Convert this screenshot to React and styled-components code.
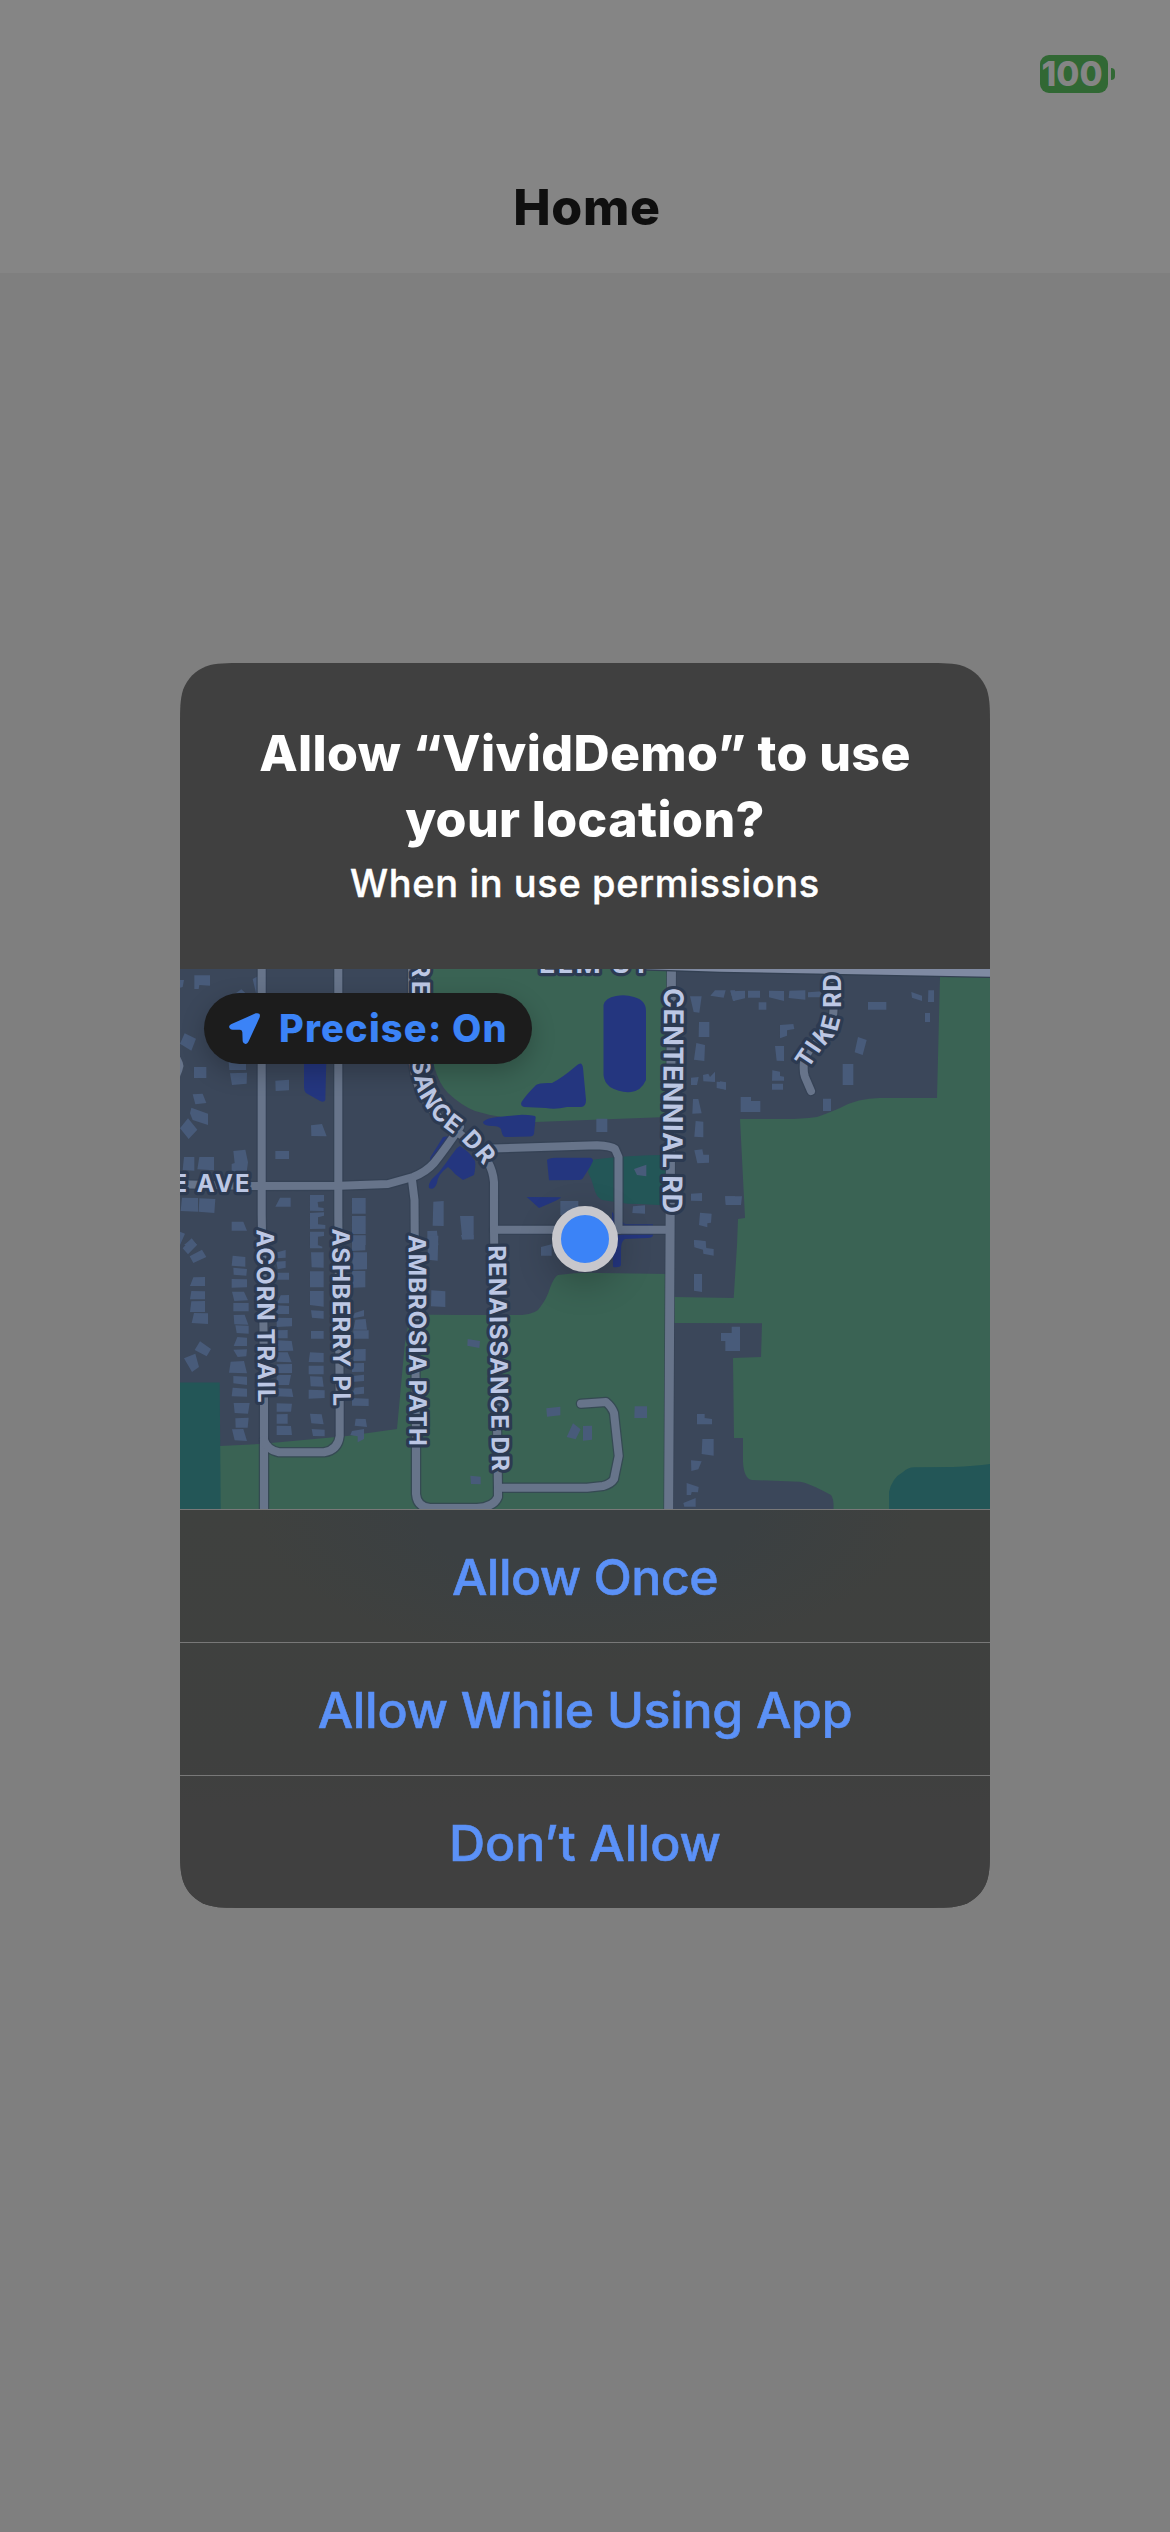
import React from "react";
import styled, { createGlobalStyle } from "styled-components";

const GlobalStyle = createGlobalStyle`
  * { box-sizing: border-box; }
  html, body { margin: 0; padding: 0; }
  body {
    background: #7f7f7f;
    font-family: Inter, "Liberation Sans", sans-serif;
  }
`;

const Screen = styled.div`
  display: flex;
  flex-direction: column;
  width: 1170px;
  height: 2532px;
  overflow: hidden;
  background: #7f7f7f;
`;

const TopBar = styled.header`
  display: flex;
  flex-direction: column;
  flex: none;
  height: 273px;
  background: #858585;
`;

const StatusBar = styled.div`
  display: flex;
  justify-content: flex-end;
  align-items: center;
  gap: 3px;
  height: 148px;
  padding-right: 55px;
`;

const BatteryBody = styled.div`
  display: flex;
  align-items: center;
  justify-content: center;
  width: 68px;
  height: 38px;
  padding-right: 4px;
  border-radius: 9px;
  background: #316834;
  color: #858585;
  font-size: 33.5px;
  font-weight: 800;
  line-height: 38px;
`;

const BatteryCap = styled.div`
  width: 4px;
  height: 12px;
  border-radius: 0 6px 6px 0;
  background: #316834;
`;

const NavTitle = styled.h1`
  margin: 26px 0 0;
  text-align: center;
  font-size: 50px;
  font-weight: 800;
  line-height: 66px;
  letter-spacing: 0.7px;
  padding-left: 4px;
  color: #0f0f0f;
`;

const Stage = styled.main`
  display: flex;
  flex: 1;
  justify-content: center;
  align-items: flex-start;
  padding-top: 390px;
`;

const CARD_W = 810;
const CARD_H = 1245;

/* Outline of a rectangle with continuous (squircle) corners. */
function continuousCorners(w, h, r) {
  const corner = (x, y, ax, ay, bx, by) => {
    const p = (a, b) =>
      `${(x + (ax * a + bx * b) * r).toFixed(2)} ${(y + (ay * a + by * b) * r).toFixed(2)}`;
    return (
      `L${p(1.52866, 0)}C${p(1.08849, 0)} ${p(0.86841, 0)} ${p(0.63149, 0.07491)}` +
      `C${p(0.37282, 0.16906)} ${p(0.16906, 0.37282)} ${p(0.07491, 0.63149)}` +
      `C${p(0, 0.86841)} ${p(0, 1.08849)} ${p(0, 1.52866)}`
    );
  };
  return (
    `M${w / 2} 0` +
    corner(w, 0, -1, 0, 0, 1) +
    corner(w, h, 0, -1, -1, 0) +
    corner(0, h, 1, 0, 0, -1) +
    corner(0, 0, 0, 1, 1, 0) +
    "Z"
  );
}

const Alert = styled.section`
  display: flex;
  flex-direction: column;
  width: ${CARD_W}px;
  height: ${CARD_H}px;
  background: #404040;
  clip-path: path("${continuousCorners(CARD_W, CARD_H, 42)}");
`;

const AlertHeader = styled.div`
  display: flex;
  flex-direction: column;
  align-items: center;
  height: 306px;
  padding-top: 57px;
  text-align: center;
  color: #fff;
`;

const AlertTitle = styled.h2`
  width: 720px;
  margin: 0;
  font-size: 50px;
  font-weight: 800;
  line-height: 66px;
  letter-spacing: 0.38px;
`;

const AlertText = styled.p`
  margin: 5px 0 0;
  font-size: 38px;
  font-weight: 500;
  line-height: 52px;
  letter-spacing: 0.61px;
  -webkit-text-stroke: 0.4px currentColor;
`;

const MapFrame = styled.div`
  position: relative;
  height: 540px;
  overflow: hidden;
`;

const MapCanvas = styled.svg`
  display: block;
  width: 810px;
  height: 540px;
`;

const PrecisePill = styled.button`
  position: absolute;
  left: 24px;
  top: 24px;
  display: flex;
  align-items: center;
  gap: 18px;
  width: 328px;
  height: 71px;
  padding: 0 0 0 24px;
  border: 0;
  border-radius: 36px;
  background: #1c1c1c;
  box-shadow: 0 8px 24px rgba(0, 0, 0, 0.22);
  color: #3b83f7;
  font-family: inherit;
  font-size: 38px;
  font-weight: 800;
  line-height: 71px;
  letter-spacing: 1.2px;
  white-space: nowrap;
`;

const ArrowIcon = styled.svg`
  width: 33px;
  height: 33px;
  flex: none;
`;

const LocationDot = styled.div`
  position: absolute;
  left: 372px;
  top: 237px;
  width: 66px;
  height: 66px;
  border: 9px solid #c7c7cc;
  border-radius: 50%;
  background: #3b83f7;
  box-shadow: 0 10px 36px rgba(0, 0, 0, 0.24);
`;

const Actions = styled.div`
  display: flex;
  flex-direction: column;
  background:
    radial-gradient(ellipse 330px 150px at 50% 0, #3b4042 0, #3b4042 50%, rgba(59, 64, 66, 0) 100%),
    linear-gradient(#3f413f 0, #3f403f 62%, #404040 75%);
`;

const ActionButton = styled.button`
  height: 133px;
  padding: 2px 0 0;
  border: 0;
  border-top: 1px solid #787878;
  background: transparent;
  color: #5b91f7;
  font-family: inherit;
  font-size: 50px;
  font-weight: 500;
  letter-spacing: ${(p) => p.$tracking}px;
  -webkit-text-stroke: 0.6px currentColor;
`;

/* ---------- map artwork ---------- */

const C = {
  land: "#3b475a",
  park: "#3a6354",
  wood: "#235657",
  water: "#24367f",
  house: "#485b7a",
  road: "#67748a",
  edge: "#334052",
  label: "#bcc7e4",
  halo: "#2c3a51",
};

const GREENS = [
  "M430 960L430 969Q432 990 432 1030Q431 1050 434 1066Q439 1084 448 1093Q462 1106 475 1111Q488 1115 502 1117L535 1122L667 1117V960Z",
  "M940 977L937 1098H880Q858 1098 840 1108Q826 1114 817 1117Q800 1119 787 1119H740L745 1218L738 1219L737 1245L733.7 1298L674 1297V1323L762 1323.3L761 1357L733 1358L734 1438H743V1462Q744 1479 752 1480L800 1481.7Q809 1483 831 1495Q834 1499 833.5 1509H990V970Z",
  "M220 1446L260 1444L347 1436L397 1429L405 1342L410 1314.5L460 1315L522 1315Q537 1314 541 1306Q547 1298 550 1288Q554 1277 558 1275Q580 1272 600 1273L668 1274V1509H220Z",
];
const WOODS = [
  "M180 1382.5H219.7L220.7 1509H180Z",
  "M889 1509V1492Q892 1478 903 1472Q908 1467 915 1467.3L953 1467Q975 1466 990 1464V1509Z",
  "M590 1160Q630 1155 667 1155V1205.5L640 1204L628 1203.7L602 1200Q596 1197 594 1188Q592 1180 588 1172Z",
];
const WATERS = [
  "M603.5 1005Q605 998 616 996Q625 994 634 997Q646 1000 646 1011L646 1080Q641 1091 631 1092Q620 1093 610 1087Q604 1082 603.5 1075Z",
  "M521.5 1102Q526 1095 536 1085Q539 1082.500 552 1083Q562 1078 576 1066Q582 1060 583 1068L586 1100Q586 1107 581 1107L567 1107Q555 1110 546 1108L524 1107Q520 1106 521.500 1102Z",
  "M483 1122Q486 1118 498 1117L522 1114.700Q536 1115 535.700 1117L534 1134Q533 1136.500 530 1136.500L505 1137Q502 1136 501 1129Q499 1126 493 1126Q483 1126 483 1122Z",
  "M547 1160Q548 1158 556 1157.700H590Q593 1158 593 1161L590 1167L583 1178Q582 1180 577 1180L549 1180.300Z",
  "M526.700 1197L561 1197.300Q560 1199 553 1202L539 1208Z",
  "M460 1146Q470 1152 475 1161Q476 1166 474 1175L463 1180L455 1174Q452 1170 448 1167Q438 1174 437 1183Q434 1191 429 1188Q428 1184 432 1179Q440 1172 446 1163Q450 1157 457 1148Z",
  "M430 1158L443 1137L456 1135L440 1160L430 1172Z",
  "M304 1060H326.300L325.300 1100Q324 1103 320 1101L306 1093Q304 1091 304 1086Z",
  "M612 1212L625 1224H653V1235Q653 1238 647 1238L625 1239Q621 1241 621 1250V1265Q620 1268 613 1267Z",
];

/* House outlines, grouped by survey sheet; each sheet is drawn at 3x. */
const HOUSES = [
  {
    at: [180, 965],
    d: "M0 45L12 45L8 66L0 68Z M43 31H90V62L58 60L56 72L43 72Z M218 42L240 31L255 74L228 84Z M168 84L184 73L196 84Z M14 205L48 221L34 257L0 236Z M42 306H79V339H42Z M38 388L68 386L79 414L46 418Z M34 428L84 446V480L38 465L30 445Z M24 460L52 494L26 522L0 490Z M146 290H198V315H148Z M150 325L201 323L200 356L156 360Z M286 347L327 344V376L287 378Z M393 481L426 477L440 514L394 513Z M286 558H327V582H286Z M160 558L196 554L204 592L200 622H155V597L164 594Z M12 576H43V617L8 615Z M58 576H102V616L52 613Z M6 698L54 699V740L2 738Z M58 700L106 702L103 744L56 740Z M300 698H332V725H286Z M155 770H190L201 797H155Z M390 690H432V709L413 711L415 727L431 729V738L390 737Z M390 744L432 742V752L414 757V778L436 780V791L390 792Z M390 800H432V813L414 815L413 840H390Z M516 699H557V746H516Z M516 753H557V807H516Z M516 811H557V840H516Z M760 710L791 708V783L758 782Z M742 798L771 797L775 840H742Z M0 800L15 806L0 840Z M12 840L34 822L52 840Z",
  },
  {
    at: [180, 1235],
    d: "M35 10L51 30L24 58L8 40Z M66 44L79 66L40 84L29 64Z M40 127L75 126V153H30Z M34 168L75 169V193H30Z M34 199L75 198V231H30Z M42 234L84 235V267L35 264Z M60 319L93 342L80 364L44 345Z M12 370L46 356L57 396L36 411Z M158 62L196 66V95L155 92Z M160 98L201 102L199 122L161 119Z M155 132L201 133V157L155 158Z M156 170H192L204 196L163 198Z M160 204H206V229H160Z M161 240L194 239L205 269L163 268Z M166 271L206 272V296L170 294Z M172 306L201 308V333H161Z M160 344L201 343L199 364L173 366Z M152 380L192 378L201 415L147 413Z M160 423L201 425V450L160 445Z M158 458L201 461V485L155 484Z M161 504H209L204 536L164 534Z M166 550L206 548L203 578H167Z M156 583L190 582L201 618L164 616Z M292 52L317 45V68L289 70Z M289 80L317 78V98L293 103Z M289 113H327V134H289Z M302 181L327 180V205H291Z M290 211L327 213V237H289Z M290 248L336 249V274L290 276Z M292 286L323 285V310H290Z M292 316L335 318L340 347L290 348Z M292 352H323L335 382L290 380Z M290 388L336 387V414H290Z M290 420H333L327 450H290Z M290 460L335 461L340 486L290 484Z M290 505L336 506L333 530H290Z M290 538L323 537V566H290Z M290 572L333 573L336 600H290Z M390 0H413V30L427 35V40H390Z M393 52H431V98L395 97Z M390 109H431V157H390Z M390 168H431V215L390 210Z M393 226L431 228V251L396 248Z M393 288H431V311H393Z M390 352L431 354V382L386 381Z M386 392H431V418H386Z M390 424L427 425L431 455L392 454Z M386 464L434 466V489L386 491Z M390 536L425 538L431 568L394 565Z M395 582L434 584V604L399 603Z M516 2H556V46L516 48Z M516 52H561V103L518 104Z M516 108H556V157L518 158Z M524 234L552 225V244L518 250Z M526 254L557 252L561 284H520Z M520 286H566V311H520Z M521 343L557 342V377L520 378Z M516 385L552 384V410L516 411Z M518 423L552 419V438L516 441Z M524 458L552 455V476L516 479Z M516 489L566 491V513L516 512Z M527 551L557 552L561 576L524 572Z M516 588L552 582V612L533 622V604L511 600Z M745 0L775 2L773 77L742 74Z M754 166L796 169V216L753 214Z",
  },
  {
    at: [455, 965],
    d: "M424 461H457V501H424Z M316 708H370V750H316Z M537 612L574 599V634L546 630Z M534 724L570 721V746L532 744Z M15 753H56V823L22 822Z M705 94H740L733 143L716 141Z M732 171H763V216H731Z M724 234L750 240L748 288L717 284Z M708 338L731 336L726 360H708Z M744 330L760 326L765 336L780 320V351L745 349Z M785 350L812 352V374L785 369Z M714 402H730L740 445L712 446Z M722 468L745 470V517L718 515Z M718 556L742 553L745 569H762V593L727 595Z M708 686L741 684V708L708 707Z M810 694H840V719H812Z M735 743L770 746L768 773L757 775V787L732 780Z M717 826L752 829V840H717Z M766 92L780 76H812L806 98Z M826 76H840V108H834Z",
  },
  {
    at: [720, 965],
    d: "M31 79L75 77V100L40 108Z M84 77H120V98H84Z M147 77L192 78V108L147 97Z M208 77L256 76V104L206 99Z M264 82L306 79L304 97H264Z M116 112H139V134H116Z M180 180L220 177L223 192L201 196V212L180 220Z M165 243H192V288L170 287Z M157 316L180 320V333L192 335V347H156Z M156 356H189V374H156Z M62 396H93V408H121V441H62Z M414 216L440 225L428 270L404 262Z M368 297H400V360H368Z M309 401H333V438H309Z M444 111H499V134H444Z M574 81L606 92V108L576 98Z M625 76H642V111H624Z M615 144H630V171H615Z M0 349L18 352V374L0 370Z M16 694H66L63 720H18Z",
  },
  {
    at: [455, 1235],
    d: "M18 0H56V13L22 14Z M258 36L290 28V62H258Z M38 312L75 318L73 339L37 332Z M274 520L316 515V541L276 545Z M354 565L377 583L362 613L335 606Z M384 573L411 572V614L384 617Z M539 514H576V549H538Z M46 722L77 725V748L48 747Z M717 15L751 18L754 39L776 42V62L745 56L744 44L718 37Z M717 117H741V171L717 167Z M830 275H855V348H811V318H798V294H830Z M726 537H749V549L771 552V568H726Z M742 612H776V662L740 657Z M708 676L740 679L730 703L709 708Z M695 744L731 756L729 772L710 771L708 780H695Z M685 804L722 789V815H688Z",
  },
];

const ROADS = [
  "M261.700 960V1215L263.500 1330L264 1400V1515",
  "M338.300 960V1215L339.700 1400V1436Q338 1450 324 1452.300H279Q267 1450 264 1440",
  "M170 1184L251 1186L340 1185.700L388 1184L413 1177Q426 1172 434 1163Q446 1148 460 1127",
  "M412 1180L414.500 1200L416 1448V1494Q417 1507 430 1508L477 1508Q494 1507 498 1497V1488L494 1231V1182Q493 1171 488 1162Q476 1146 460 1134Q412 1104 412 1050V960",
  "M492 1148.500L597 1145.300Q611 1146 615 1149L618.500 1157V1230",
  "M494 1229.700H669",
  "M581 1403.700L606 1402Q612 1407 614 1413L618.700 1456L614 1479Q611 1484 603 1486L587 1487.700H499",
  "M833.500 968V1010Q833 1030 817 1042Q806 1052 804 1062Q803 1072 805 1077L811 1091",
];

const Label = styled.text`
  font-family: Inter, "Liberation Sans", sans-serif;
  font-size: ${(p) => p.$size || 24}px;
  font-weight: 700;
  letter-spacing: ${(p) => p.$tracking || 0}px;
  fill: ${C.label};
  stroke: ${C.halo};
  stroke-width: 6.5px;
  stroke-linejoin: round;
  paint-order: stroke;
`;

const STREETS = [
  { x: 664, y: 988, angle: 90.35, length: 225, size: 27, name: "CENTENNIAL RD" },
  { x: 256.5, y: 1229.5, angle: 89.5, length: 173, name: "ACORN TRAIL" },
  { x: 332.2, y: 1228.5, angle: 89.6, length: 177.5, name: "ASHBERRY PL" },
  { x: 408.6, y: 1235, angle: 89.8, length: 211, name: "AMBROSIA PATH" },
  { x: 488.5, y: 1245.5, angle: 89.1, length: 225.5, name: "RENAISSANCE DR" },
];

function StreetLabel({ x, y, angle, length, size, name }) {
  return (
    <Label
      $size={size}
      textLength={length}
      transform={`translate(${x} ${y}) rotate(${angle})`}
    >
      {name}
    </Label>
  );
}

function NeighborhoodMap() {
  return (
    <MapCanvas viewBox="180 969 810 540">
      <defs>
        <path id="bend" d="M412 961.500L412 1052Q412 1077 420 1097Q432 1120 453 1134Q470 1147 486 1169L495 1184" />
        <path id="tike" d="M808 1069.500L821 1050L834 1036Q840 1027 841 1012L841 950" />
      </defs>
      <rect x="180" y="969" width="810" height="540" fill={C.land} />
      {GREENS.map((d) => <path key={d} d={d} fill={C.park} />)}
      {WOODS.map((d) => <path key={d} d={d} fill={C.wood} />)}
      {WATERS.map((d) => <path key={d} d={d} fill={C.water} />)}
      {HOUSES.map(({ at, d }) => (
        <path
          key={at.join()}
          d={d}
          fill={C.house}
          transform={`translate(${at[0]} ${at[1]}) scale(0.33333)`}
        />
      ))}
      <g fill="none" stroke={C.edge} strokeOpacity="0.7" strokeWidth="10.5" strokeLinecap="round" strokeLinejoin="round">
        {ROADS.map((d) => <path key={d} d={d} />)}
        <path d="M671.500 960L668.600 1515" />
      </g>
      <g fill="none" stroke={C.road} strokeWidth="8" strokeLinecap="round" strokeLinejoin="round">
        {ROADS.map((d) => <path key={d} d={d} />)}
        <path d="M671.500 960L668.600 1515" strokeWidth="9" />
        <path d="M176 1050L180 1056.500Q183 1062 183.500 1066Q182 1074 176 1084Z" fill={C.road} stroke="none" />
      </g>
      <path d="M640 970.500L720 973L990 978V969H640Z" fill={C.edge} />
      <path d="M640 969L720 971.700L990 976.700V969Z" fill="#7f8aa2" />

      <Label $size={27} x="539" y="972.700" textLength="111">ELM ST</Label>
      <Label x="172.500" y="1191.700" textLength="77">E AVE</Label>
      {STREETS.map((s) => <StreetLabel key={s.name} {...s} />)}
      <Label>
        <textPath href="#bend" textLength="34">RE</textPath>
      </Label>
      <Label>
        <textPath href="#bend" startOffset="98" textLength="133">SANCE DR</textPath>
      </Label>
      <Label $tracking={2.4}>
        <textPath href="#tike">TIKE</textPath>
      </Label>
      <Label $tracking={0.4}>
        <textPath href="#tike" startOffset="72">RD</textPath>
      </Label>
    </MapCanvas>
  );
}

const ACTIONS = [
  { label: "Allow Once", tracking: -0.52 },
  { label: "Allow While Using App", tracking: -0.31 },
  { label: "Don’t Allow", tracking: 0.06 },
];

export default function App() {
  return (
    <Screen>
      <GlobalStyle />
      <TopBar>
        <StatusBar>
          <BatteryBody>100</BatteryBody>
          <BatteryCap />
        </StatusBar>
        <NavTitle>Home</NavTitle>
      </TopBar>
      <Stage>
        <Alert>
          <AlertHeader>
            <AlertTitle>
              Allow “VividDemo” to use your location?
            </AlertTitle>
            <AlertText>When in use permissions</AlertText>
          </AlertHeader>
          <MapFrame>
            <NeighborhoodMap />
            <PrecisePill>
              <ArrowIcon viewBox="144 142 99 99">
                <path
                  d="M227 146L153 179Q142 186 152 194Q155 196 180 195.500Q187 196 187 203L188 230Q190 239 198 238Q203 237 206 230L239 158Q243 143 227 146Z"
                  fill="#3b83f7"
                />
              </ArrowIcon>
              Precise: On
            </PrecisePill>
            <LocationDot />
          </MapFrame>
          <Actions>
            {ACTIONS.map((a) => (
              <ActionButton key={a.label} $tracking={a.tracking}>{a.label}</ActionButton>
            ))}
          </Actions>
        </Alert>
      </Stage>
    </Screen>
  );
}
